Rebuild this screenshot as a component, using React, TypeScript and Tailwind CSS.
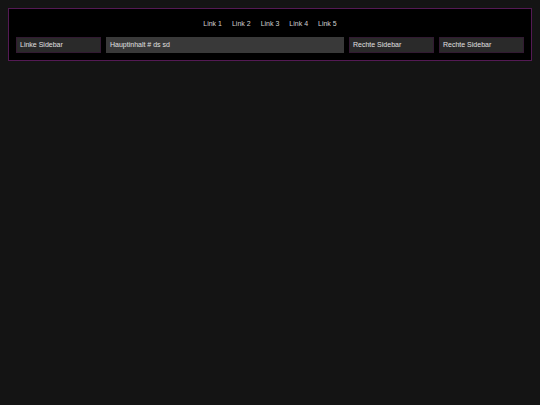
export default function App() {
  const links = ["Link 1", "Link 2", "Link 3", "Link 4", "Link 5"];
  return (
    <div className="min-h-[405px] bg-[#141414] p-2 font-['Liberation_Sans',Arial,sans-serif] antialiased">
      <div className="border border-[#541a54] bg-black px-[7px] pb-[7px]">
        <nav className="flex h-[28px] items-center justify-center gap-[10px] pt-[2px]">
          {links.map((l) => (
            <a key={l} className="text-[7px] text-[#d0d0d0]">
              {l}
            </a>
          ))}
        </nav>
        <div className="flex h-[16px] gap-[5px] text-[7px] text-[#e0e0e0]">
          <div className="flex w-[85px] items-center border border-[#321a32] bg-[#2a2a2a] px-[3px]">
            Linke Sidebar
          </div>
          <div className="flex flex-1 items-center bg-[#393939] px-[4px]">
            Hauptinhalt # ds sd
          </div>
          <div className="flex w-[85px] items-center border border-[#321a32] bg-[#2a2a2a] px-[3px]">
            Rechte Sidebar
          </div>
          <div className="flex w-[85px] items-center border border-[#321a32] bg-[#2a2a2a] px-[3px]">
            Rechte Sidebar
          </div>
        </div>
      </div>
    </div>
  );
}
